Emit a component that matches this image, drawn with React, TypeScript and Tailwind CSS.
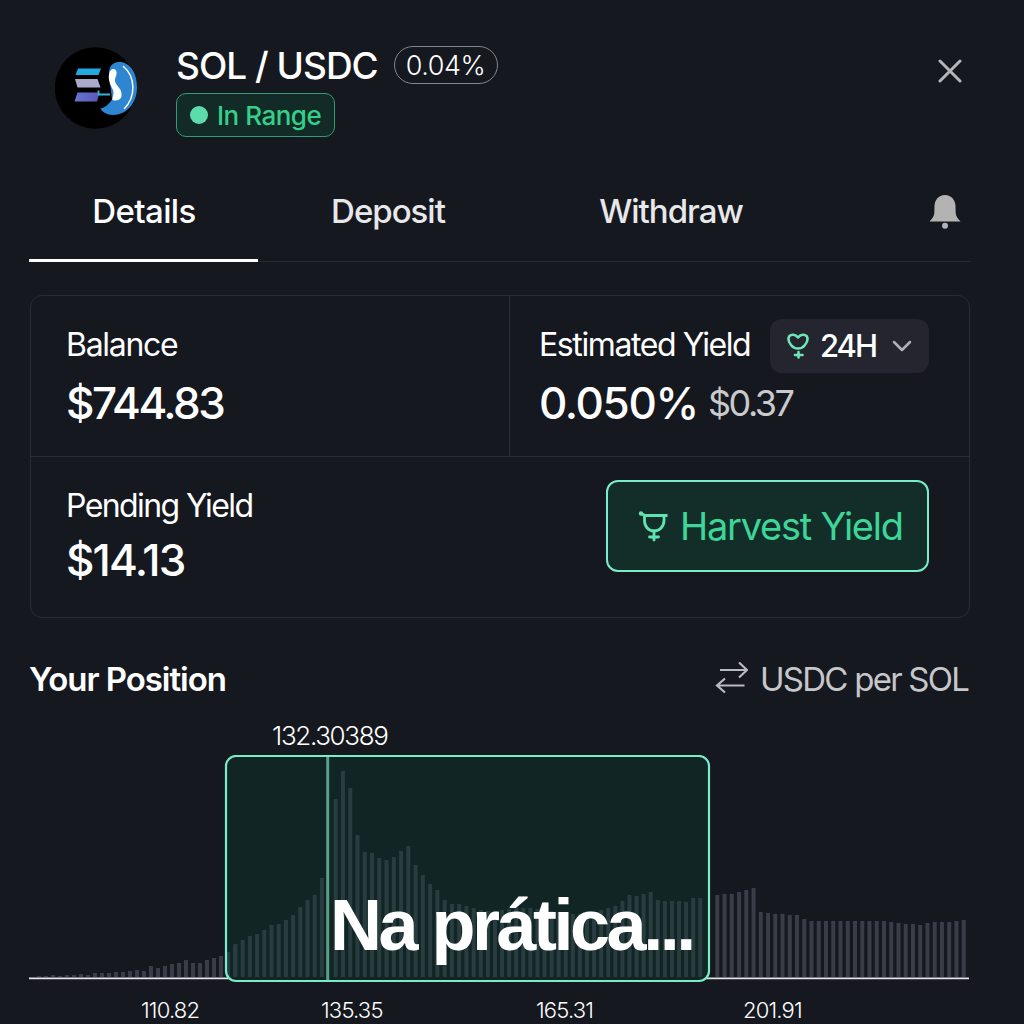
import { useState } from 'react';
import { ChevronDown } from 'lucide-react';

const TABS = [
  { name: 'Details', width: 'w-[229px]' },
  { name: 'Deposit', width: 'w-[259px]' },
  { name: 'Withdraw', width: 'w-[307px]' },
];

// chart coordinates: 940 wide, baseline at y = 222
const BASELINE = 222;
const RANGE = { from: 197, to: 680 };

const BAR_GROUPS = [
  {
    start: 10,
    step: 7,
    heights: [1, 1, 2, 1, 2, 2, 3, 2, 4, 4, 4, 5, 5, 6, 7, 6, 11, 9, 11, 13, 14, 17, 14, 14, 17, 19, 21, 25, 32],
  },
  {
    start: 206.5,
    step: 7.2,
    heights: [33, 37, 41, 43, 47, 52, 53, 57, 62, 70, 77, 82, 99],
  },
  {
    start: 306.7,
    step: 7.263,
    heights: [178, 206, 189, 142, 125, 124, 119, 117, 120, 126, 131, 112, 102, 93, 87, 77, 73, 73, 71, 69],
  },
  {
    start: 451.8,
    step: 7.08,
    heights: [
      67, 66, 66, 67, 68, 69, 69, 69, 68, 67, 66, 65, 64, 63, 63, 63, 65, 67, 69, 71, 76, 82, 81, 83, 85, 77, 76, 76,
      76, 75, 79, 79,
    ],
  },
  {
    start: 688.3,
    step: 7.247,
    heights: [
      82, 83, 83, 85, 87, 89, 65, 64, 63, 63, 62, 62, 58, 56, 56, 56, 56, 56, 56, 56, 56, 56, 56, 56, 55, 54, 53, 53,
      52, 54, 55, 55, 55, 56, 57,
    ],
  },
];

const TICKS = [
  { label: '110.82', left: 'left-[141px]' },
  { label: '135.35', left: 'left-[321px]' },
  { label: '165.31', left: 'left-[536px]' },
  { label: '201.91', left: 'left-[743px]' },
];

function PairLogo() {
  return (
    <svg className="mt-[14px] h-[84px] w-[84px] shrink-0" viewBox="0 0 84 84">
      <defs>
        <linearGradient id="barBottom" x1="0" y1="0" x2="1" y2="0">
          <stop offset="0" stopColor="#6674d0" />
          <stop offset="1" stopColor="#5b57b8" />
        </linearGradient>
      </defs>
      <circle cx="40.500" cy="41" r="40.800" fill="#000" />
      <path d="M23 21.500h23l-2.500 6.500H20.500z" fill="#23a8e0" />
      <path d="M20 32h22.500l3 8.500H22.500z" fill="#a9a9c9" />
      <path d="M22.500 45.500h22l-2.500 9H19.500z" fill="url(#barBottom)" />
      <path d="M43.500 43.500v4H55" fill="none" stroke="#35b4d6" strokeWidth="1.800" />
      <path
        d="M63 15c11-1 19 10 19 25 0 17-11 28-24 28-6 0-11-3-12.500-6.500 5-1 9-5 11.500-9l-3-27c0-5 3-10 9-10.500z"
        fill="#2f86d0"
      />
      <path
        d="M57.500 22c-3.500 1.500-4.500 7-3 13 1 5 4 7 4 10 0 4-2 8-.500 8.300 5 .700 8-.800 8.500-4.300 1-8-6-10-6.500-15-.200-4 2-5 1.500-9.500-.300-1.500-2-3-4-2.500z"
        fill="#fff"
      />
      <path d="M68 19c13 11 13 31 1 43" fill="none" stroke="#fff" strokeWidth="1.500" />
    </svg>
  );
}

function BellIcon() {
  return (
    <svg className="h-9 w-8" viewBox="0 0 32 36" fill="#b3b3b3">
      <path d="M16 2C9.500 2 5.700 7 5.500 13l-.200 7c-.200 3-1.800 5.500-4.800 8.500h31c-3-3-4.600-5.500-4.800-8.500l-.200-7C26.300 7 22.500 2 16 2z" />
      <circle cx="16" cy="32.800" r="3" />
    </svg>
  );
}

function PlantIcon() {
  return (
    <svg className="h-[26px] w-[22px]" viewBox="0 0 22 26" fill="none" stroke="#6ee7b7" strokeWidth="2.600" strokeLinecap="round" strokeLinejoin="round">
      <path d="M11 4.500C8.500 1 4.200 1 2.300 3.200.8 5.500 2 9.500 4.200 12.300c3.400 4.300 10.200 4.300 13.600 0C20 9.500 21.200 5.500 19.700 3.200 17.800 1 13.500 1 11 4.500z" />
      <path d="M11.500 19v5.500M8 22h7.500" />
    </svg>
  );
}

function HarvestIcon() {
  return (
    <svg className="h-8 w-[30px]" viewBox="0 0 30 32" fill="none" stroke="#5fe3b0" strokeWidth="2.800" strokeLinejoin="round">
      <circle cx="3" cy="3.500" r="2.200" fill="#5fe3b0" stroke="none" />
      <path d="M3 3.500l4 2h22.500" />
      <path d="M6.500 5.500v5c0 6 4 10.500 9.500 10.500s10-4.500 10-10.500v-5" />
      <path d="M16 21v9M11.500 27h9" strokeLinecap="round" />
    </svg>
  );
}

function SwapIcon() {
  return (
    <svg className="h-8 w-[33px]" viewBox="0 0 33 32" fill="none" stroke="#b8babd" strokeWidth="2.200">
      <path d="M5 8h26.500M24 .5L32 8l-8 7.500" />
      <path d="M29.500 23.500H2M10 16.500l-8 7 8 7" />
    </svg>
  );
}

function PositionChart() {
  return (
    <div className="relative mt-[3px] h-[228px]">
      <svg className="h-[228px] w-[941px]" viewBox="0 0 941 228">
        <path d="M0 223.300h940" stroke="#e4e4e7" strokeWidth="1.800" />
        <rect x="197" y="1" width="483" height="225" rx="10" fill="#112524" />
        {BAR_GROUPS.map((group) =>
          group.heights.map((h, i) => {
            const x = group.start + i * group.step;
            const inRange = x > RANGE.from && x < RANGE.to;
            return (
              <rect
                key={`${group.start}-${i}`}
                x={x - 2}
                y={BASELINE - h}
                width="4"
                height={h}
                fill={inRange ? '#293d41' : '#3a3c47'}
              />
            );
          })
        )}
        <rect x="197" y="1" width="483" height="225" rx="10" fill="none" stroke="#79ecc9" strokeWidth="2.200" />
        <path d="M298.700 2v223" stroke="#5c9e8b" strokeWidth="3" />
      </svg>
      <p className="absolute top-[130px] left-[301px] font-['Liberation_Sans',sans-serif] text-[72px] leading-[80px] font-bold tracking-[-3.5px] whitespace-nowrap text-white">
        Na prática...
      </p>
    </div>
  );
}

export default function App() {
  const [tab, setTab] = useState('Details');

  return (
    <div className="h-[1024px] w-[1024px] overflow-hidden bg-[#16181f] pt-[33px] pr-[53px] pl-[29px] font-['Inter','Liberation_Sans',sans-serif] text-white">
      <header className="flex h-[137px] pl-[26px]">
        <PairLogo />
        <div className="ml-[37px] pt-[10px]">
          <div className="flex items-center">
            <h1 className="w-[202px] text-[37px] leading-[46px] font-medium tracking-[-1px] whitespace-nowrap">SOL / USDC</h1>
            <span className="ml-4 flex h-[38px] w-[104px] -translate-y-px items-center justify-center rounded-full border-[1.5px] border-[#85868a] pt-0.5 pr-px text-[27px] font-light tracking-[-0.5px]">
              0.04%
            </span>
          </div>
          <div className="mt-1 flex h-[44px] w-[159px] items-center rounded-[10px] border-[1.5px] border-[#2f9e78] bg-[#122b27] pl-[13px]">
            <span className="h-[18px] w-[18px] rounded-full bg-[#5bdcaa]" />
            <span className="ml-[9px] text-[26px] font-medium tracking-[-0.5px] whitespace-nowrap text-[#34d08a]">In Range</span>
          </div>
        </div>
        <button className="mt-[26px] mr-[9px] ml-auto h-6 w-6">
          <svg viewBox="0 0 24 24" fill="none" stroke="#b5b6b8" strokeWidth="3" strokeLinecap="round">
            <path d="M2 2l20 20M22 2L2 22" />
          </svg>
        </button>
      </header>

      <nav className="flex h-[92px] border-b border-[#292b32]">
        {TABS.map((t) => (
          <button
            key={t.name}
            onClick={() => setTab(t.name)}
            className={`${t.width} relative -mb-px h-[92px] pb-[5px] pl-px text-[33px] font-medium ${
              tab === t.name
                ? 'border-b-[3px] border-white tracking-[-0.6px]'
                : 'border-b-[3px] border-transparent tracking-[-1px] text-[#e8e8ea]'
            }`}
          >
            {t.name}
          </button>
        ))}
        <button className="mt-[23px] mr-[10px] ml-auto h-9 w-8">
          <BellIcon />
        </button>
      </nav>

      <section className="mt-[33px] mr-px ml-px h-[323px] rounded-xl border border-[#2a2c33]">
        <div className="flex h-[161px] border-b border-[#2a2c33]">
          <div className="w-[479px] border-r border-[#2a2c33] pt-[28px] pl-[35px]">
            <p className="text-[32px] leading-[42px] tracking-[-1.3px]">Balance</p>
            <p className="mt-2 text-[44px] leading-[58px] font-medium tracking-[-2.5px]">$744.83</p>
          </div>
          <div className="flex-1 pt-[23px] pl-[29px]">
            <div className="flex h-[54px] items-center">
              <p className="w-[231px] pb-0.5 text-[32px] tracking-[-1.4px] whitespace-nowrap">Estimated Yield</p>
              <button className="flex h-[54px] w-[159px] items-center rounded-xl bg-[#24252f] pl-[17px]">
                <PlantIcon />
                <span className="ml-[11px] w-[56px] text-[31px] font-medium tracking-[-2px]">24H</span>
                <ChevronDown className="ml-[10px] h-8 w-8 shrink-0 text-[#b0b0b5]" strokeWidth={1.9} />
              </button>
            </div>
            <div className="mt-px flex whitespace-nowrap">
              <span className="w-[169px] text-[44px] leading-[58px] font-medium tracking-[-1.4px]">0.050%</span>
              <span className="pt-px text-[36px] leading-[56px] tracking-[-2.5px] text-[#c9cacd]">$0.37</span>
            </div>
          </div>
        </div>
        <div className="flex h-[160px] pr-10 pl-[35px]">
          <div className="pt-[28px]">
            <p className="text-[32px] leading-[42px] tracking-[-1.6px]">Pending Yield</p>
            <p className="mt-1 text-[44px] leading-[58px] font-medium tracking-[-1.8px]">$14.13</p>
          </div>
          <button className="mt-[23px] ml-auto flex h-[92px] w-[323px] items-center rounded-xl border-2 border-[#79ecc9] bg-[#132e29] pl-[30px]">
            <HarvestIcon />
            <span className="ml-3 pt-px text-[38px] tracking-[-1.25px] whitespace-nowrap text-[#3dd598]">Harvest Yield</span>
          </button>
        </div>
      </section>

      <div className="mt-[37px] flex h-[50px] items-center justify-between">
        <h2 className="text-[33px] font-semibold tracking-[-1.05px]">Your Position</h2>
        <div className="flex items-center gap-3">
          <div className="pb-1">
            <SwapIcon />
          </div>
          <span className="w-[211px] text-[33px] tracking-[-1.75px] whitespace-nowrap text-[#c6c7ca]">USDC per SOL</span>
        </div>
      </div>
      <p className="mt-[15px] pl-[243px] text-[26px] leading-[32px] font-light tracking-[-1.35px]">132.30389</p>
      <PositionChart />
      <div className="relative -mx-[29px] mt-[11px] h-8 text-[22px] leading-8 font-light tracking-[-0.8px]">
        {TICKS.map((t) => (
          <span key={t.label} className={`absolute ${t.left}`}>
            {t.label}
          </span>
        ))}
      </div>
    </div>
  );
}
